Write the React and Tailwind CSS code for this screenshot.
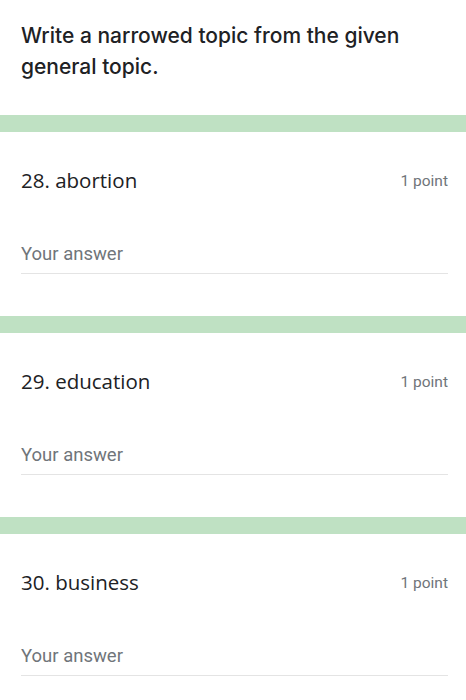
const questions = [
  { id: 28, topic: "abortion" },
  { id: 29, topic: "education" },
  { id: 30, topic: "business" },
]

const Question = ({ id, topic }) => {
  return (
    <div className="flex flex-col">
      <div className="h-[17px] w-full bg-[#bfe1c3]" />
      <div className="h-[184px] pl-[21px] pr-[18px] pt-[35px]">
        <div className="flex items-center justify-between">
          <div className="font-['Open_Sans',sans-serif] text-[20.5px] leading-[24px] text-[#202124]">{id}. {topic}</div>
          <div className="text-[15.5px] leading-[24px] text-[#70757a] pt-[2px]">1 point</div>
        </div>
        <div className="mt-[50px] border-b border-[#e4e4e4] pb-[7px] text-[18.5px] leading-[23px] text-[#70757a]">
          Your answer
        </div>
      </div>
    </div>
  )
}

const App = () => {
  return (
    <div className="w-[466px] h-[700px] overflow-hidden bg-white font-['Roboto',sans-serif]">
      <div className="h-[115px] pl-[21px] pr-[18px] pt-[20px]">
        <div className="max-w-[405px] font-['Inter',sans-serif] text-[21px] leading-[31px] font-medium text-[#202124]">
          Write a narrowed topic from the given general topic.
        </div>
      </div>
      {questions.map(q => (
        <Question key={q.id} id={q.id} topic={q.topic} />
      ))}
    </div>
  )
}

export default App
